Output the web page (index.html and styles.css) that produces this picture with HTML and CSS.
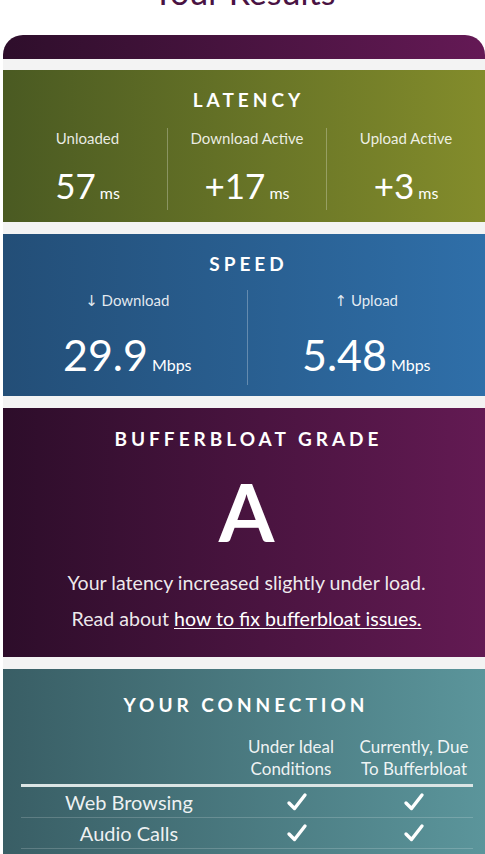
FILE: index.html
```html
<!DOCTYPE html>
<html lang="en">
<head>
<meta charset="utf-8">
<title>Your Results</title>
<link rel="stylesheet" href="styles.css">
</head>
<body>
<div class="page">
  <h1 class="title">Your Results</h1>
  <div class="results">
    <div class="cap"></div>
    <div class="cards">
      <section class="card latency">
        <h2 class="heading">LATENCY</h2>
        <div class="cols three">
          <div class="col">
            <div class="label">Unloaded</div>
            <div class="value">57<span class="unit">ms</span></div>
          </div>
          <div class="col">
            <div class="label">Download Active</div>
            <div class="value">+17<span class="unit">ms</span></div>
          </div>
          <div class="col">
            <div class="label">Upload Active</div>
            <div class="value">+3<span class="unit">ms</span></div>
          </div>
        </div>
      </section>

      <section class="card speed">
        <h2 class="heading">SPEED</h2>
        <div class="cols two">
          <div class="col">
            <div class="label"><span class="arrow">↓</span> Download</div>
            <div class="value big">29.9<span class="unit">Mbps</span></div>
          </div>
          <div class="col">
            <div class="label"><span class="arrow">↑</span> Upload</div>
            <div class="value big">5.48<span class="unit">Mbps</span></div>
          </div>
        </div>
      </section>

      <section class="card grade">
        <h2 class="heading">BUFFERBLOAT GRADE</h2>
        <div class="letter">A</div>
        <p class="desc">Your latency increased slightly under load.</p>
        <p class="desc">Read about <a class="link" href="#">how to fix bufferbloat issues.</a></p>
      </section>

      <section class="card connection">
        <h2 class="heading">YOUR CONNECTION</h2>
        <div class="table">
          <div class="row head">
            <div class="cell name"></div>
            <div class="cell c1">Under Ideal<br>Conditions</div>
            <div class="cell c2">Currently, Due<br>To Bufferbloat</div>
          </div>
          <div class="row">
            <div class="cell name">Web Browsing</div>
            <div class="cell c1"><svg class="check" viewBox="0 0 22 20"><path d="M3 11 L8.5 16.5 L19 3" /></svg></div>
            <div class="cell c2"><svg class="check" viewBox="0 0 22 20"><path d="M3 11 L8.5 16.5 L19 3" /></svg></div>
          </div>
          <div class="row">
            <div class="cell name">Audio Calls</div>
            <div class="cell c1"><svg class="check" viewBox="0 0 22 20"><path d="M3 11 L8.5 16.5 L19 3" /></svg></div>
            <div class="cell c2"><svg class="check" viewBox="0 0 22 20"><path d="M3 11 L8.5 16.5 L19 3" /></svg></div>
          </div>
        </div>
      </section>
    </div>
  </div>
</div>
</body>
</html>
```
FILE: styles.css
```css
html, body {
  margin: 0;
  padding: 0;
  background: #ffffff;
  overflow: hidden;
}
body {
  font-family: Lato, "Noto Sans", sans-serif;
  color: #ffffff;
}
.page {
  width: 482px;
  margin-left: 3px;
}
.title {
  margin: -28px 0 0 0;
  height: 63px;
  line-height: 40px;
  font-size: 34px;
  font-weight: 400;
  color: #4a1343;
  text-align: center;
}
.cap {
  height: 24px;
  border-radius: 20px 20px 0 0;
  background: linear-gradient(90deg, #2e0e2b 0%, #641955 100%);
}
.cards {
  background: #f3f3f3;
  padding-top: 11px;
  display: flex;
  flex-direction: column;
  gap: 12px;
}
.card {
  text-align: center;
}
.heading {
  margin: 0;
  font-size: 19px;
  line-height: 24px;
  height: 24px;
  font-weight: 700;
  letter-spacing: 4px;
  text-indent: 4px;
}
.latency {
  background: linear-gradient(90deg, #4a5a22 0%, #838c2b 100%);
  padding: 18px 0 12px 5px;
}
.speed {
  background: linear-gradient(90deg, #234e77 0%, #2f6fa9 100%);
  padding: 18px 0 11px 5px;
}
.grade {
  background: linear-gradient(90deg, #2d0d2a 0%, #631a53 100%);
  padding: 19px 0 20px 5px;
}
.connection {
  background: linear-gradient(90deg, #395e65 0%, #5b959b 100%);
  padding: 24px 0 20px 0;
}
.cols {
  display: grid;
}
.cols.three {
  grid-template-columns: 1fr 1fr 1fr;
  margin-top: 16px;
}
.cols.two {
  grid-template-columns: 1fr 1fr;
  margin-top: 14px;
}
.col {
  display: flex;
  flex-direction: column;
  align-items: center;
}
.col + .col {
  border-left: 1px solid rgba(255, 255, 255, 0.28);
}
.latency .col {
  padding-bottom: 5px;
}
.speed .col {
  padding-bottom: 5px;
}
.label {
  font-size: 15px;
  line-height: 20px;
  height: 20px;
  color: rgba(255, 255, 255, 0.88);
}
.arrow {
  font-family: "DejaVu Sans", sans-serif;
  font-size: 15px;
  line-height: 1;
}
.value {
  display: flex;
  align-items: baseline;
  justify-content: center;
  font-size: 35px;
  line-height: 40px;
  height: 40px;
  margin-top: 17px;
  font-weight: 400;
}
.value.big {
  font-size: 43px;
  line-height: 50px;
  height: 50px;
  margin-top: 20px;
}
.unit {
  font-size: 16px;
  line-height: 1;
  margin-left: 4px;
}
.letter {
  font-size: 80px;
  font-weight: 700;
  line-height: 80px;
  height: 80px;
  margin-top: 20px;
}
.desc {
  margin: 0;
  font-size: 19.6px;
  line-height: 36px;
  height: 36px;
  color: rgba(255, 255, 255, 0.92);
}
.letter + .desc {
  margin-top: 14px;
}
.link {
  color: #ffffff;
  text-decoration: underline;
  text-underline-offset: 2px;
}
.table {
  margin: 19px 12px 0 18px;
}
.row {
  display: grid;
  grid-template-columns: 216px 108px 1fr;
  align-items: center;
  border-bottom: 1px solid rgba(255, 255, 255, 0.18);
  height: 30px;
}
.row.head {
  height: auto;
  padding-bottom: 4px;
  border-bottom: 3px solid #dbe5e5;
  align-items: end;
}
.cell {
  text-align: center;
}
.head .cell {
  font-size: 17px;
  line-height: 22px;
  color: rgba(255, 255, 255, 0.92);
}
.cell.c2 {
  padding-left: 10px;
}
.row:not(.head) .cell.c1 {
  padding-left: 12px;
}
.name {
  font-size: 20px;
  line-height: 30px;
  color: rgba(255, 255, 255, 0.92);
}
.check {
  display: block;
  margin: 0 auto;
  width: 22px;
  height: 20px;
  fill: none;
  stroke: #ffffff;
  stroke-width: 3.4;
  stroke-linecap: round;
  stroke-linejoin: round;
}
```
